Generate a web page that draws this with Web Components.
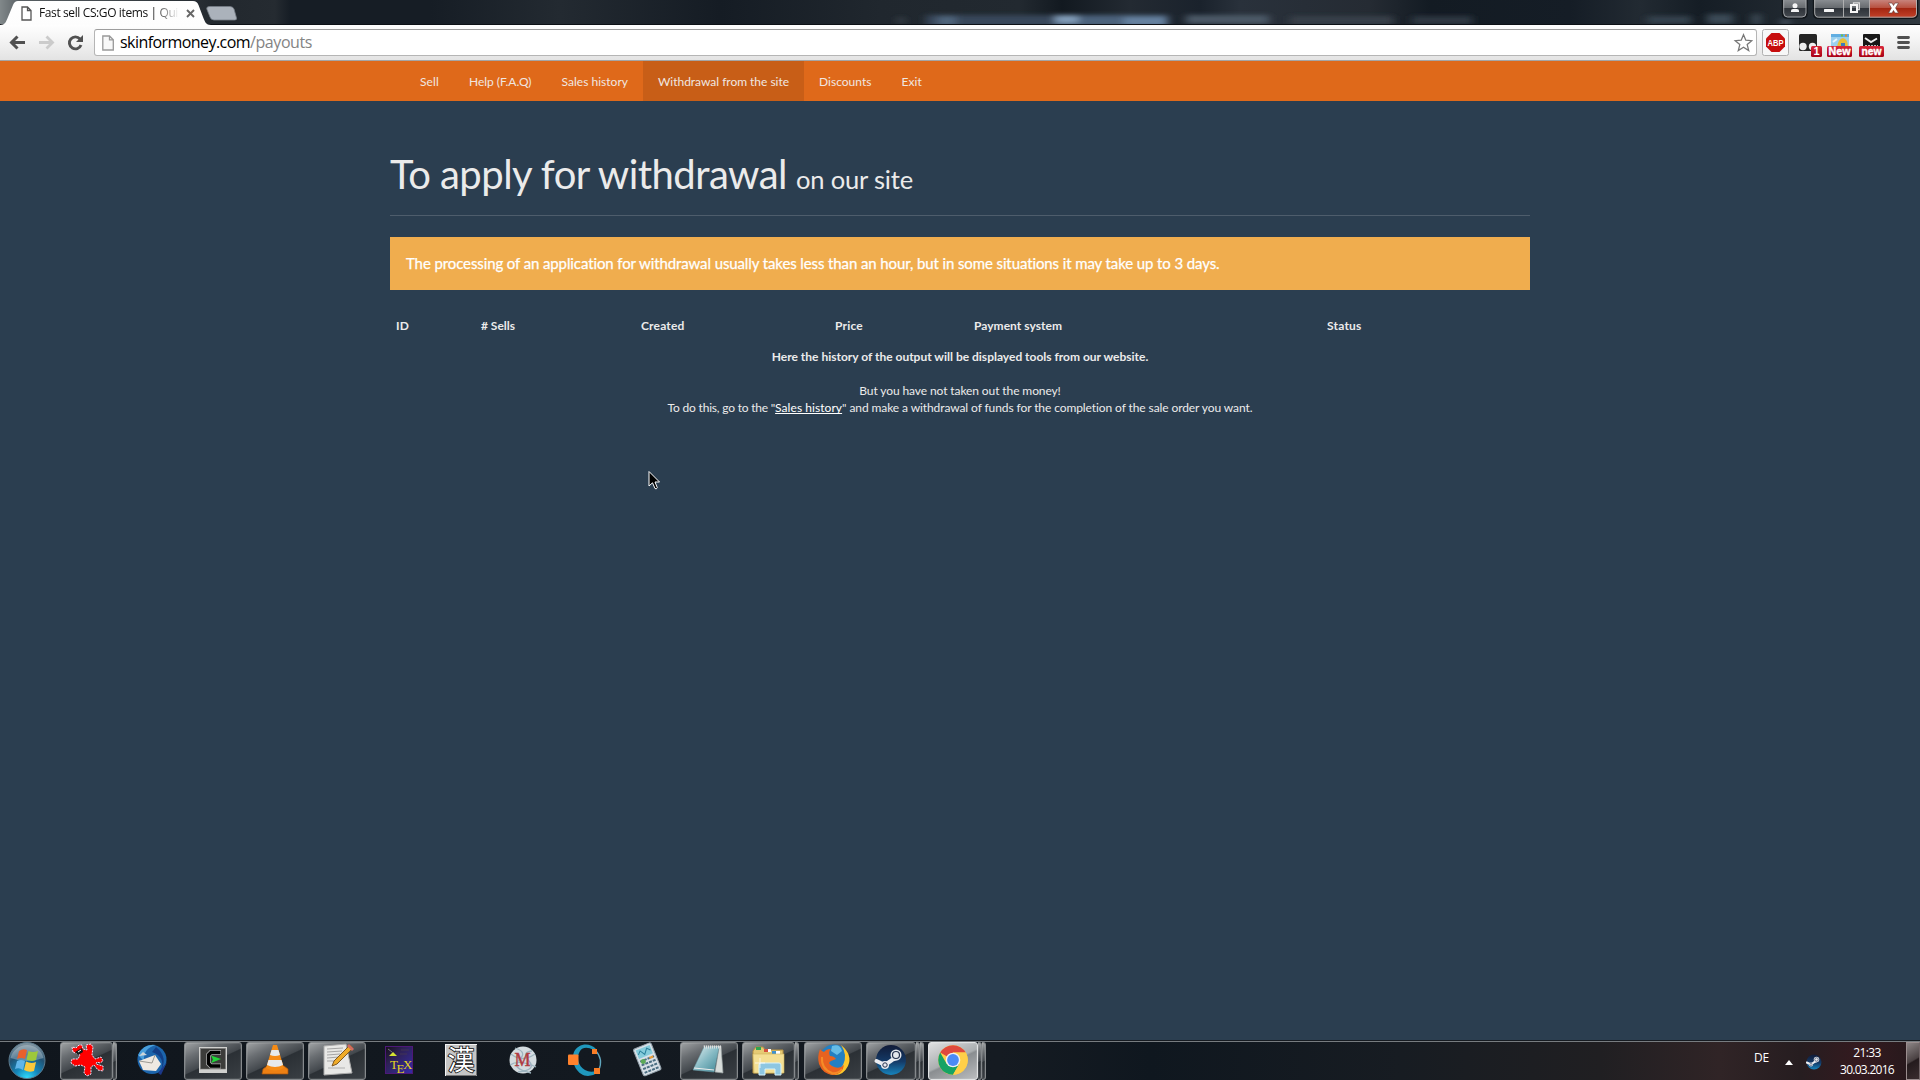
<!DOCTYPE html>
<html lang="en">
<head>
<meta charset="utf-8">
<title>Fast sell CS:GO items</title>
<style>
html,body{margin:0;height:100%;overflow:hidden;background:#2b3e50}
desktop-screen{width:100vw;height:100vh}
</style>
</head>
<body>
<desktop-screen></desktop-screen>
<script>
const define = (name, html, after) => customElements.define(name, class extends HTMLElement {
  constructor() {
    super();
    const t = document.createElement('template');
    t.innerHTML = html;
    this.attachShadow({mode: 'open'}).appendChild(t.content.cloneNode(true));
  }
  connectedCallback() { if (after) after(this); }
});

/* Text run spread to a given width (attribute w) through letter spacing */
define('fit-text', `<style>:host{display:inline-block;white-space:pre}span{display:inline-block}:host([u]) span{text-decoration:underline;text-decoration-thickness:1px;text-underline-offset:1px;text-decoration-skip-ink:none}</style><span><slot></slot></span>`, el => {
  const s = el.shadowRoot.querySelector('span');
  const w = parseFloat(el.getAttribute('w')), n = el.textContent.length;
  s.style.letterSpacing = '0px';
  const d = (w - s.getBoundingClientRect().width) / n;
  s.style.letterSpacing = d.toFixed(4) + 'px';
});

define('browser-tab', `<style>
:host{display:block;position:relative;width:214px;height:25px;font:12px "Open Sans",sans-serif;color:#111}
svg{display:block;position:absolute;left:0;top:0}
.row{position:relative;display:flex;align-items:center;height:24px;padding:1px 0 0 21px}
.row svg{position:static}
.t{width:139px;overflow:hidden;margin:0 0 2px 7px;-webkit-mask-image:linear-gradient(90deg,#000 114px,transparent 140px);mask-image:linear-gradient(90deg,#000 114px,transparent 140px)}
.x{margin-left:8px}
</style>
<svg width="214" height="26"><defs><linearGradient id="g" x2="0" y2="1"><stop stop-color="#fff"/><stop offset="1" stop-color="#fdfdfd"/></linearGradient></defs>
<path d="M0 25C5 25 6 22 8 17L13 5Q14.500 1 18 1H193Q197 1 198.500 5L203 17C205 22 206 25 211 25V26H0Z" fill="url(#g)"/></svg>
<div class="row"><svg width="11" height="15" viewBox="0 0 11 15"><path d="M1 1H6.500L10 4.500V14H1ZM6.500 1V4.500H10" fill="#fff" stroke="#555" stroke-width="1.300"/></svg>
<div class="t"><slot></slot></div>
<svg class="x" width="9" height="9"><path d="M1 1L8 8M8 1L1 8" stroke="#666" stroke-width="1.900"/></svg></div>`);

define('window-controls', `<style>:host{display:block;width:140px;height:25px}svg{display:block}</style>
<svg width="140" height="20" viewBox="1780 0 140 20">
<defs><linearGradient id="a" x2="0" y2="1"><stop stop-color="#8d9195"/><stop offset=".48" stop-color="#65696d"/><stop offset=".5" stop-color="#2e3339"/><stop offset="1" stop-color="#464b51"/></linearGradient>
<linearGradient id="b" x2="0" y2="1"><stop stop-color="#c98a83"/><stop offset=".46" stop-color="#b8503f"/><stop offset=".5" stop-color="#a32611"/><stop offset="1" stop-color="#c5432b"/></linearGradient></defs>
<path d="M1782.500 -1V13Q1782.500 18 1787 18H1802.500Q1807 18 1807 13V-1Z" fill="url(#a)" stroke="#11161a" stroke-width="1.500"/>
<path d="M1783.700 0V13Q1784 17 1787.500 17H1802Q1806 17 1806 13V0" fill="none" stroke="#a9acaf" stroke-width=".9"/>
<path d="M1813.500 -1V14Q1813.500 18 1818 18H1869V-1Z" fill="url(#a)"/>
<path d="M1869.500 -1V18H1912.500Q1917.500 18 1917.500 13V-1Z" fill="url(#b)"/>
<path d="M1813.500 -1V13Q1813.500 18.300 1818 18.300H1912.500Q1917.600 18.300 1917.600 13V-1" fill="none" stroke="#11161a" stroke-width="1.400"/>
<path d="M1814.700 0V13Q1815 17.200 1818.500 17.200H1912Q1916.500 17.200 1916.500 13V0M1843.500 0V17M1869.500 0V17" fill="none" stroke="#b5b5b5" stroke-width=".9"/>
<g fill="#f4f4f4"><circle cx="1795" cy="5.800" r="2.500"/><path d="M1791 12V10.500Q1791 9 1793 9H1797Q1799 9 1799 10.500V12Z"/><rect x="1824" y="9" width="10" height="3" rx=".5"/></g>
<path d="M1853.500 4.500V2.900H1859.300V9.500H1858" fill="none" stroke="#ddd" stroke-width="1.300"/><rect x="1851" y="5" width="6" height="7" fill="none" stroke="#f6f6f6" stroke-width="2"/>
<path d="M1888.500 3H1892L1893.500 5.500L1895 3H1898.500L1895.600 8L1898.500 13H1895L1893.500 10.500L1892 13H1888.500L1891.400 8Z" fill="#fff" stroke="#5e3832" stroke-width=".6"/>
</svg>`);

define('window-bar', `<style>
:host{display:flex;height:25px;overflow:hidden;position:relative;background:linear-gradient(90deg,#81888a 0,#596064 20px,#22282e 215px,#252b31 275px,#161d25 290px,#161d25 430px,#232a31 560px,#151c24 720px,#20272e 880px,#222930 1020px,#121920 1062px,#232a32 1130px,#1a222c 1200px,#29313b 1240px,#252b33 1370px,#131b23 1430px,#151d26 1570px,#222a32 1640px,#151d25 1700px,#313940 1920px)}
.haze{position:absolute;left:0;top:0}
browser-tab,.new,.sp,window-controls{position:relative}
.new{display:block;margin:6px 0 0 -8px}.sp{flex:1}
</style>
<svg class="haze" width="1920" height="25"><defs><filter id="f" x="-20%" y="-60%" width="140%" height="220%"><feGaussianBlur stdDeviation="4 2.200"/></filter></defs>
<g filter="url(#f)"><rect x="898" y="17" width="6" height="7" fill="#3a434b"/><rect x="926" y="15" width="130" height="12" fill="#38475a"/><rect x="938" y="16" width="18" height="10" fill="#4f657c"/><rect x="1054" y="15" width="114" height="12" fill="#4b627b"/><rect x="1056" y="15" width="22" height="8" fill="#829db9"/><rect x="1124" y="17" width="42" height="9" fill="#6682a0"/><rect x="1186" y="15" width="83" height="9" fill="#4b5866"/><rect x="1290" y="16" width="103" height="9" fill="#37404a"/><rect x="1412" y="16" width="60" height="9" fill="#2d3843"/><rect x="1647" y="16" width="44" height="8" fill="#35424d"/><rect x="1707" y="14" width="26" height="10" fill="#3b4955"/><rect x="1752" y="14" width="9" height="11" fill="#3b4955"/><rect x="1781" y="20" width="9" height="4" fill="#526070"/></g>
<path d="M0 24.500H1920" stroke="#0d1116"/></svg>
<browser-tab><fit-text w="139">Fast sell CS:GO items | Qui</fit-text></browser-tab>
<svg class="new" width="32" height="15"><path d="M3.500 .5H24Q27 .5 28 3L30.500 12Q31 14 28.500 14H8Q5 14 4 11L.8 3Q.3 .5 3.500 .5Z" fill="#abb2bb" stroke="#767e87" stroke-width=".8"/></svg>
<div class="sp"></div><window-controls></window-controls>`);

define('browser-toolbar', `<style>
:host{display:flex;box-sizing:border-box;height:36px;background:linear-gradient(#fefefe,#f4f4f4 15px,#e3e3e3);border-bottom:1px solid #a5a5a5;padding-top:4px}
svg{display:block;flex:none}
.box{flex:1;box-sizing:border-box;display:flex;align-items:center;height:27px;border:1px solid #b5b5b5;border-top-color:#9d9d9d;border-radius:3px;background:#fff;padding:0 3px 0 7px;font:16px "Open Sans",sans-serif;color:#000}
.url{flex:1;margin:0 0 2px 6px;white-space:pre}
.url span{color:#848484}
</style>
<svg width="94" height="27" viewBox="0 29 94 27"><path d="M12 42.500H25M17.500 36.500L11.500 42.500L17.500 48.500" fill="none" stroke="#515151" stroke-width="3"/>
<path d="M39 42.500H52M46.500 36.500L52.500 42.500L46.500 48.500" fill="none" stroke="#cbcbcb" stroke-width="2.800"/>
<path d="M80 39A6 6 0 1 0 81 45" fill="none" stroke="#515151" stroke-width="2.900"/><path d="M83 35V42H76Z" fill="#515151"/></svg>
<div class="box"><svg width="12" height="16"><path d="M.8 1H7.500L11.300 4.800V15H.8ZM7.500 1V4.800H11.300" fill="#f8f8f8" stroke="#999" stroke-width="1.300"/></svg>
<div class="url"><fit-text w="130">skinformoney.com</fit-text><span><fit-text w="62">/payouts</fit-text></span></div>
<svg width="20" height="20" viewBox="0 0 20 20"><path d="M10.500 1.700L12.800 7.200L18.800 7.700L14.200 11.600L15.700 17.600L10.500 14.300L5.300 17.600L6.800 11.600L2.200 7.700L8.200 7.200Z" fill="#fff" stroke="#777" stroke-width="1.300"/></svg></div>
<svg width="163" height="28" viewBox="1757 29 163 28" font-family="Liberation Sans,sans-serif" font-weight="bold">
<defs><linearGradient id="r" x2="0" y2="1"><stop stop-color="#d9283a"/><stop offset="1" stop-color="#a80014"/></linearGradient></defs>
<rect x="1762.500" y="29.500" width="26" height="26" rx="2" fill="#f7f7f7" stroke="#b0b0b0"/>
<path d="M1771.500 33H1779.500L1785 38.500V46.500L1779.500 52H1771.500L1766 46.500V38.500Z" fill="#c70d0d"/>
<text x="1767.500" y="46" font-size="9.500" fill="#fff" textLength="16" lengthAdjust="spacingAndGlyphs">ABP</text>
<rect x="1799" y="34" width="18" height="17" rx="1.500" fill="#252525"/><circle cx="1803" cy="46.500" r="3.700" fill="#eee"/><circle cx="1812.500" cy="46.500" r="3.700" fill="#eee"/>
<rect x="1811" y="46" width="11" height="11" rx="1.500" fill="url(#r)"/><text x="1813.500" y="55.200" font-size="11" fill="#fff">1</text>
<rect x="1831" y="34" width="18" height="15" rx="1.500" fill="#9bd0ee"/><rect x="1831" y="34" width="18" height="3" fill="#61aee2"/><rect x="1841" y="34.500" width="2" height="2" fill="#6fc04b"/><rect x="1845" y="34.500" width="2" height="2" fill="#e88b2d"/><path d="M1837 47Q1838 39 1843 38Q1848 39 1848 47Z" fill="#e9bd38"/><path d="M1841 46V43H1845V46" fill="#3d7dbb"/><path d="M1833 42L1837 39" stroke="#e8f6fd" stroke-width="2"/>
<rect x="1827" y="46" width="25" height="11" rx="1.500" fill="url(#r)"/><text x="1828.500" y="55.200" font-size="11" fill="#fff" stroke="#fff" stroke-width=".4" textLength="22" lengthAdjust="spacingAndGlyphs">New</text>
<rect x="1863" y="34" width="17" height="14" rx="1" fill="#171717"/><path d="M1865 38L1871 42L1877 38.500" stroke="#eee" stroke-width="2" fill="none"/><path d="M1865 45.500H1878" stroke="#bbb" stroke-dasharray="2 1"/>
<rect x="1859" y="46" width="25" height="11" rx="1.500" fill="url(#r)"/><text x="1861.500" y="55.200" font-size="11" fill="#fff" stroke="#fff" stroke-width=".4" textLength="20" lengthAdjust="spacingAndGlyphs">new</text>
<path d="M1898.500 37.500H1908.500M1898.500 42.500H1908.500M1898.500 47.500H1908.500" stroke="#515151" stroke-width="2.800" stroke-linecap="round"/></svg>`);

define('nav-item', `<style>:host{display:block;box-sizing:border-box;height:40px;padding:0 15px;line-height:41px;color:#f0e7e1}:host([active]){background:#c85e17}</style><slot></slot>`);
define('site-nav', `<style>:host{display:flex;box-sizing:border-box;height:40px;background:#df691a;padding-left:405px;font:12px Lato,sans-serif}</style><slot></slot>`);

define('page-header', `<style>:host{display:block;box-sizing:border-box;height:115px;border-bottom:1px solid #4e5d6c;color:#ebebeb;font:40px/43px Lato,sans-serif;padding-top:52px;white-space:nowrap}
.s{font-size:25.500px;margin-left:9px}</style><slot></slot><span class="s"><slot name="sub"></slot></span>`);

define('info-alert', `<style>:host{display:block;box-sizing:border-box;margin-top:21px;height:53px;padding:0 16px;background:#f0ad4e;color:#fff;font:15px/53px Lato,sans-serif;-webkit-text-stroke:.25px #fff}</style><slot></slot>`);

define('payout-table', `<style>
:host{display:block;margin-top:25px;font:12px/17px Lato,sans-serif;color:#ebebeb}
.head{display:grid;grid-template-columns:85px 160px 194px 139px 353px 1fr;height:29px;padding:2px 0 0 6px;box-sizing:border-box;font-weight:700}
.body{display:flex;flex-direction:column;align-items:center;padding-top:4px}
.body div{height:17px;white-space:pre}
.b{font-weight:700;margin-bottom:17px}
a{color:#fff}
</style>
<div class="head"><span><fit-text w="13">ID</fit-text></span><span><fit-text w="34">#&nbsp;Sells</fit-text></span><span><fit-text w="43.500">Created</fit-text></span><span><fit-text w="28">Price</fit-text></span><span><fit-text w="88">Payment system</fit-text></span><span><fit-text w="34.500">Status</fit-text></span></div>
<div class="body"><div class="b"><fit-text w="376.500">Here the history of the output will be displayed tools from our website.</fit-text></div>
<div><fit-text w="201.500">But you have not taken out the money!</fit-text></div>
<div><fit-text w="107.500">To do this, go to the "</fit-text><a><fit-text u w="67">Sales history</fit-text></a><fit-text w="410.500">" and make a withdrawal of funds for the completion of the sale order you want.</fit-text></div></div>`);

define('site-page', `<style>:host{display:flex;flex-direction:column;flex:1;min-height:0;background:#2b3e50;position:relative}
.c{width:1140px;margin:0 auto}
.cursor{position:absolute;left:648px;top:409px}</style>
<site-nav><nav-item><fit-text w="19">Sell</fit-text></nav-item><nav-item><fit-text w="62.500">Help (F.A.Q)</fit-text></nav-item><nav-item><fit-text w="66.500">Sales history</fit-text></nav-item><nav-item active><fit-text w="131">Withdrawal from the site</fit-text></nav-item><nav-item><fit-text w="52.500">Discounts</fit-text></nav-item><nav-item><fit-text w="20.500">Exit</fit-text></nav-item></site-nav>
<div class="c"><page-header><fit-text w="397">To apply for withdrawal</fit-text><fit-text slot="sub" w="117">on our site</fit-text></page-header>
<info-alert><fit-text w="814">The processing of an application for withdrawal usually takes less than an hour, but in some situations it may take up to 3 days.</fit-text></info-alert>
<payout-table></payout-table></div>
<svg class="cursor" width="13" height="21" viewBox="0 0 13 21"><path d="M1 1.500V16L4.500 12.800L7 18.500Q8.500 19.500 9.300 17.700L7 12H11.500Z" fill="#000" stroke="#fff" stroke-width="1"/></svg>`);

define('task-item', `<style>
:host{display:flex;width:62px;height:38px;flex:none}
.m{box-sizing:border-box;width:58px;height:38px;display:flex;align-items:center;justify-content:center;padding-bottom:2px;border:1px solid transparent;border-radius:3px}
:host([open]) .m,.e{border:1px solid #85898c;background:linear-gradient(155deg,#a0a3a5 0,#6b6f73 25%,#43484d 50%,#2b3035 52%,#3a3f44 100%);box-shadow:inset 0 0 0 1px #ffffff18}
:host([active]) .m{border-color:#e1e3e4;background:linear-gradient(155deg,#dfe0e1,#aaaeb0 48%,#8a8e91 52%,#bbbdbf)}
:host([stack="1"]) .m{width:53px}:host([stack="2"]) .m{width:50px}
.e{display:none;box-sizing:border-box;width:4px;height:38px;border-left:0;border-radius:0 3px 3px 0}
:host([stack]) .e1{display:block}:host([stack="2"]) .e2{display:block}
</style><div class="m"><slot></slot></div><div class="e e1"></div><div class="e e2"></div>`);

const steam = `<circle cx="16" cy="16" r="15" fill="url(#st)"/><path d="M1.500 17L10 21L17 16L22 14" stroke="#eceef2" stroke-width="4" fill="none" stroke-linecap="round"/><circle cx="21" cy="11" r="5.500" fill="#e5e8ed"/><circle cx="21" cy="11" r="3.500" fill="#e5e8ed" stroke="#26334f" stroke-width="1.200"/><circle cx="10" cy="21" r="4" fill="#e9ebf0"/><circle cx="10" cy="21" r="2.200" fill="none" stroke="#26334f"/>`;
const steamDef = `<defs><linearGradient id="st" x2="0" y2="1"><stop stop-color="#111b38"/><stop offset=".55" stop-color="#143a67"/><stop offset="1" stop-color="#1784bd"/></linearGradient></defs>`;
const ic = {
 red:`<path d="M2 8L1 3L5 4L8 1L11 1L12 5L16 6L15 1L20 0L22 3L21 11L24 15L30 13L32 17L29 19L26 18L25 20L32 22V27L27 26L23 21L20 23L20 30L16 32L13 29L14 23L10 21L4 22L0 19L1 15L7 15L9 11Z" fill="#f00" stroke="#eaeaff" stroke-width="1" stroke-dasharray="2 1"/><path d="M4 8L11 4L12 8L7 11Z" fill="#181818"/><path d="M7 8L10 6" stroke="#fff"/>`,
 bird:`<circle cx="17" cy="15.500" r="14.500" fill="#1c65ac"/><path d="M3 11Q9 -1 21 1Q8 4 9 17Z" fill="#4a9fdb"/><path d="M21 3Q34 13 25 29Q32 13 17 8" fill="#123e86"/><path d="M4 17L20 11L26 20L21 27L8 26Z" fill="#eee9e2"/><path d="M4 17L17 19L20 11" fill="none" stroke="#9b9992"/><path d="M8 8L4 12L12 11Z" fill="#ccd5d9"/><path d="M23 29L32 18L26 31Z" fill="#1b3889"/>`,
 cterm:`<rect x="2" y="3" width="28" height="26" fill="#d0d0ce"/><rect x="3.500" y="4.500" width="25" height="20.500" fill="#3c3c3a" stroke="#777" stroke-width=".6"/><path d="M24 8.500H14L11.500 11V19.500L14 22H24" stroke="#b0b0b0" stroke-width="5" fill="none"/><path d="M23.500 8.500H14L11.500 11V19.500L14 22H23.500" stroke="#000" stroke-width="3.400" fill="none"/><path d="M14 11.500L24 15L14 19L16 15.500Z" fill="#20d438"/>`,
 vlc:`<path d="M4 25L8 22H25L29 25V30H3Z" fill="#ed8013" stroke="#a9540b" stroke-width=".7"/><path d="M14 1H18L25 24Q16 29 7 24Z" fill="#f58b16"/><path d="M12.500 6H19.500L21 11Q16 13 11 11ZM9.500 16H22.500L24 21Q16 25 8 21Z" fill="#e7eaec"/>`,
 edit:`<path d="M3 2L25 0L31 29L3 31Z" fill="#e8e8e6" stroke="#aaa"/><path d="M6 5L22 4M6 8L21 7M6 11L19 10M6 14L18 13M6 17L15 17" stroke="#a5a5a5"/><path d="M7 24H24" stroke="#999" stroke-width=".7"/><path d="M29 1L32 4L16 20L11 22L13 17Z" fill="#efab28" stroke="#805820"/><path d="M28 0L33 5L31 7L26 2Z" fill="#d06c61"/>`,
 tex:`<defs><linearGradient id="tx" x2="1" y2="1"><stop stop-color="#151017"/><stop offset=".35" stop-color="#2e2154"/><stop offset="1" stop-color="#352ba8"/></linearGradient></defs><rect x="2.500" y="2.500" width="27" height="27" fill="url(#tx)" stroke="#4d1878"/><path d="M6 12L10 8L14 12Z" fill="#d5e332"/><path d="M5 5L9 8" stroke="#777"/><path d="M18 6H26M17 10H24" stroke="#423554"/><g font-family="Liberation Serif,serif" font-size="13" fill="#e5d321"><text x="7" y="25">T</text><text x="13.500" y="29">E</text><text x="20" y="25">X</text></g>`,
 kan:`<rect x=".5" y=".5" width="31" height="31" fill="#c5c5c5" stroke="#f4f4f4"/><path d="M1 31.500H31.500V1" fill="none" stroke="#747474"/><text x="2.500" y="25.700" font-family="Noto Sans CJK JP,sans-serif" font-size="27" fill="#fff" stroke="#111" stroke-width="1.700" paint-order="stroke">漢</text>`,
 max:`<circle cx="16" cy="16" r="13.500" fill="#d4dce0"/><path d="M8 4Q21 8 12 16T24 29M25 7Q14 8 22 17T11 28M4 10Q15 19 28 10M3 21Q12 15 29 23" fill="none" stroke="#9eb4bf" stroke-width="1.300"/><text x="7.500" y="22" font-family="Liberation Serif,serif" font-size="18" fill="#b13b40" stroke="#b13b40" stroke-width=".4">M</text>`,
 oct:`<path d="M27 5C21 -2 9 -1 5 8C1 19 9 32 19 32Q24 32 28 29L27 27Q21 29 16 26C9 22 7 13 11 7Q15 1 25 6Z" fill="#2098bd"/><path d="M26 6Q35 15 29.500 27" fill="none" stroke="#60a6be" stroke-width="1.300"/><rect x="-1" y="10.500" width="10.500" height="10.500" rx="1" fill="#ff822c"/><rect x="23" y="5" width="5" height="5" fill="#f97d26"/><rect x="25" y="24" width="6" height="6" fill="#f97d26"/>`,
 calc:`<g transform="rotate(-22 16 16)"><rect x="7" y="1" width="19" height="29" rx="2" fill="#d9e0e7" stroke="#94a2ac"/><rect x="9" y="3" width="15" height="9" fill="#86ccdc"/><path d="M10 8L13 5L16 10L20 5L23 8" fill="none" stroke="#287f9b"/><path d="M9 15H24M9 19H24M9 23H24M9 27H24" stroke="#4b6e82" stroke-width="2" stroke-dasharray="3 1"/><circle cx="12" cy="16" r="2.500" fill="#5ca958"/><rect x="19" y="14" width="4" height="2" fill="#ec9e37"/></g>`,
 note:`<path d="M10 2H28L30 29L22 28L26 4Z" fill="#d7dcda" stroke="#98a1a0" stroke-width=".7"/><path d="M11 3H26L21 28L0 26Z" fill="url(#nt)" stroke="#6a9da8" stroke-width=".5"/><path d="M1 24L21 26" stroke="#eee"/><path d="M11 3H28" stroke="#ddd" stroke-width="3" stroke-dasharray="1 1"/><defs><linearGradient id="nt" x2="1" y2="1"><stop stop-color="#e4eff0"/><stop offset=".5" stop-color="#86bac4"/><stop offset="1" stop-color="#3f8796"/></linearGradient></defs>`,
 fold:`<path d="M0 7L3 3H10L12 6H30V29H0Z" fill="#e6ca74" stroke="#b69040"/><rect x="3" y="3" width="5" height="3" fill="#2fa650"/><rect x="11" y="5" width="7" height="3" fill="#fff"/><rect x="11" y="5" width="4" height="3" fill="#d5503c"/><rect x="19" y="7" width="8" height="3" fill="#fff"/><rect x="19" y="7" width="4" height="3" fill="#3d91cf"/><path d="M0 10H31V29H1Z" fill="#f4df93" stroke="#cdb25d" stroke-width=".6"/><path d="M6 31V21Q6 19 8 19H26Q28 19 28 21V31H22V25H12V31Z" fill="#8ec7e2" stroke="#d8f2fa"/><path d="M2 19H12M7 14V24" stroke="#fff" opacity=".7"/>`,
 fox:`<circle cx="17" cy="15" r="14.500" fill="#2280c3"/><path d="M15 2Q23 -1 25 7L20 11L14 7Z" fill="#65bce6"/><path d="M24 1Q36 11 31 22Q25 34 12 30Q21 29 26 21Q31 11 24 1Z" fill="#fdc72b"/><path d="M3 5Q0 13 2 20Q6 31 17 31Q26 29 27 21Q22 26 15 22Q10 19 14 17L19 15Q17 12 13 12Q11 8 14 5Q9 5 7 8Q4 7 3 5Z" fill="#e8621f"/><path d="M5 13Q4 25 15 29Q21 30 25 25" fill="none" stroke="#f58b27" stroke-width="2"/>`,
 steam: steamDef + steam,
 chrome:`<circle cx="16" cy="16" r="14.800" fill="#ffcf48"/><path d="M16 16L3.200 8.600A14.800 14.800 0 0 1 28.800 8.600H16Z" fill="#df493d"/><path d="M3.200 8.600A14.800 14.800 0 0 0 16 30.800L22.400 19.700L16 16L9.600 19.700Z" fill="#16a364"/><path d="M16 8.600H28.800A14.800 14.800 0 0 1 16 30.800L22.400 19.700Z" fill="#ffcf48"/><circle cx="16" cy="16" r="7.300" fill="#f2f2f2"/><circle cx="16" cy="16" r="5.900" fill="#4c8bf5"/>`
};
define('app-icon', `<style>:host{display:block;width:32px;height:32px}svg{display:block;overflow:visible}</style><svg width="32" height="32" viewBox="0 0 32 32"></svg>`, el => {
  el.shadowRoot.querySelector('svg').innerHTML = ic[el.getAttribute('name')];
});

define('system-tray', `<style>:host{display:flex;height:38px;color:#fff;font:12px "Open Sans",sans-serif;align-items:center}
.lang{margin-bottom:8px}.up{margin:3px 0 0 16px}.st{margin:2px 0 0 13px}
.clock{display:flex;flex-direction:column;align-items:center;width:56px;margin-left:17px;line-height:17px}
.peek{box-sizing:border-box;width:14px;height:38px;margin-left:11px;border:1px solid #9a8d8e;border-right-color:#716567;background:linear-gradient(150deg,#8c8586,#4a4142 48%,#241b1d 52%,#3a2d2f)}
</style><div class="lang"><fit-text w="15">DE</fit-text></div>
<svg class="up" width="8" height="5"><path d="M0 5L4 0L8 5Z" fill="#fff"/></svg>
<svg class="st" width="16" height="16" viewBox="0 0 32 32">${steamDef}${steam}</svg>
<div class="clock"><fit-text w="27.500">21:33</fit-text><fit-text w="54">30.03.2016</fit-text></div><div class="peek"></div>`);

define('task-bar', `<style>:host{display:flex;box-sizing:border-box;height:40px;flex:none;border-top:1px solid #161b21;background:linear-gradient(90deg,#10161d,#151b22 1000px,#0f171f 1150px,#171c22 1400px,#201f22 1600px,#302426 1720px,#261d20 1800px,#341a1f 1860px,#25191c)}
.in{display:flex;width:100%;box-sizing:border-box;border-top:1px solid #777c80}
.orb{width:60px;display:block;flex:none}.sp{flex:1}</style>
<div class="in"><svg class="orb" width="60" height="38" viewBox="0 1042 60 38"><defs><radialGradient id="o" cx=".5" cy="1" r=".95"><stop stop-color="#32e0ff"/><stop offset=".35" stop-color="#1487bb"/><stop offset=".7" stop-color="#215273"/><stop offset="1" stop-color="#7d929f"/></radialGradient></defs>
<circle cx="27" cy="1060.500" r="18" fill="url(#o)" stroke="#5b798c"/><path d="M10.500 1058A17 17 0 0 1 43.500 1058Q27 1064 10.500 1058Z" fill="#fff" opacity=".28"/>
<path d="M19 1051Q23 1048 27 1050L25 1059Q21 1057 17 1059Z" fill="#e8612c"/><path d="M28.500 1051Q33 1053 38 1051L36 1060Q31 1062 26.500 1059.500Z" fill="#9dc83b"/><path d="M17 1061Q21 1059 25 1061L23 1070Q19 1067 15 1069Z" fill="#60b5e9"/><path d="M26 1061.500Q31 1064 36 1062L34 1071Q29 1073 24 1070Z" fill="#fac83b"/></svg>
<task-item open stack="1"><app-icon name="red"></app-icon></task-item>
<task-item><app-icon name="bird"></app-icon></task-item>
<task-item open><app-icon name="cterm"></app-icon></task-item>
<task-item open><app-icon name="vlc"></app-icon></task-item>
<task-item open><app-icon name="edit"></app-icon></task-item>
<task-item><app-icon name="tex"></app-icon></task-item>
<task-item><app-icon name="kan"></app-icon></task-item>
<task-item><app-icon name="max"></app-icon></task-item>
<task-item><app-icon name="oct"></app-icon></task-item>
<task-item><app-icon name="calc"></app-icon></task-item>
<task-item open><app-icon name="note"></app-icon></task-item>
<task-item open stack="1"><app-icon name="fold"></app-icon></task-item>
<task-item open><app-icon name="fox"></app-icon></task-item>
<task-item open stack="2"><app-icon name="steam"></app-icon></task-item>
<task-item open active stack="2"><app-icon name="chrome"></app-icon></task-item>
<div class="sp"></div><system-tray></system-tray></div>`);

define('desktop-screen', `<style>:host{display:flex;flex-direction:column}window-bar,browser-toolbar{flex:none}</style>
<window-bar></window-bar><browser-toolbar></browser-toolbar><site-page></site-page><task-bar></task-bar>`);
</script>
</body>
</html>
